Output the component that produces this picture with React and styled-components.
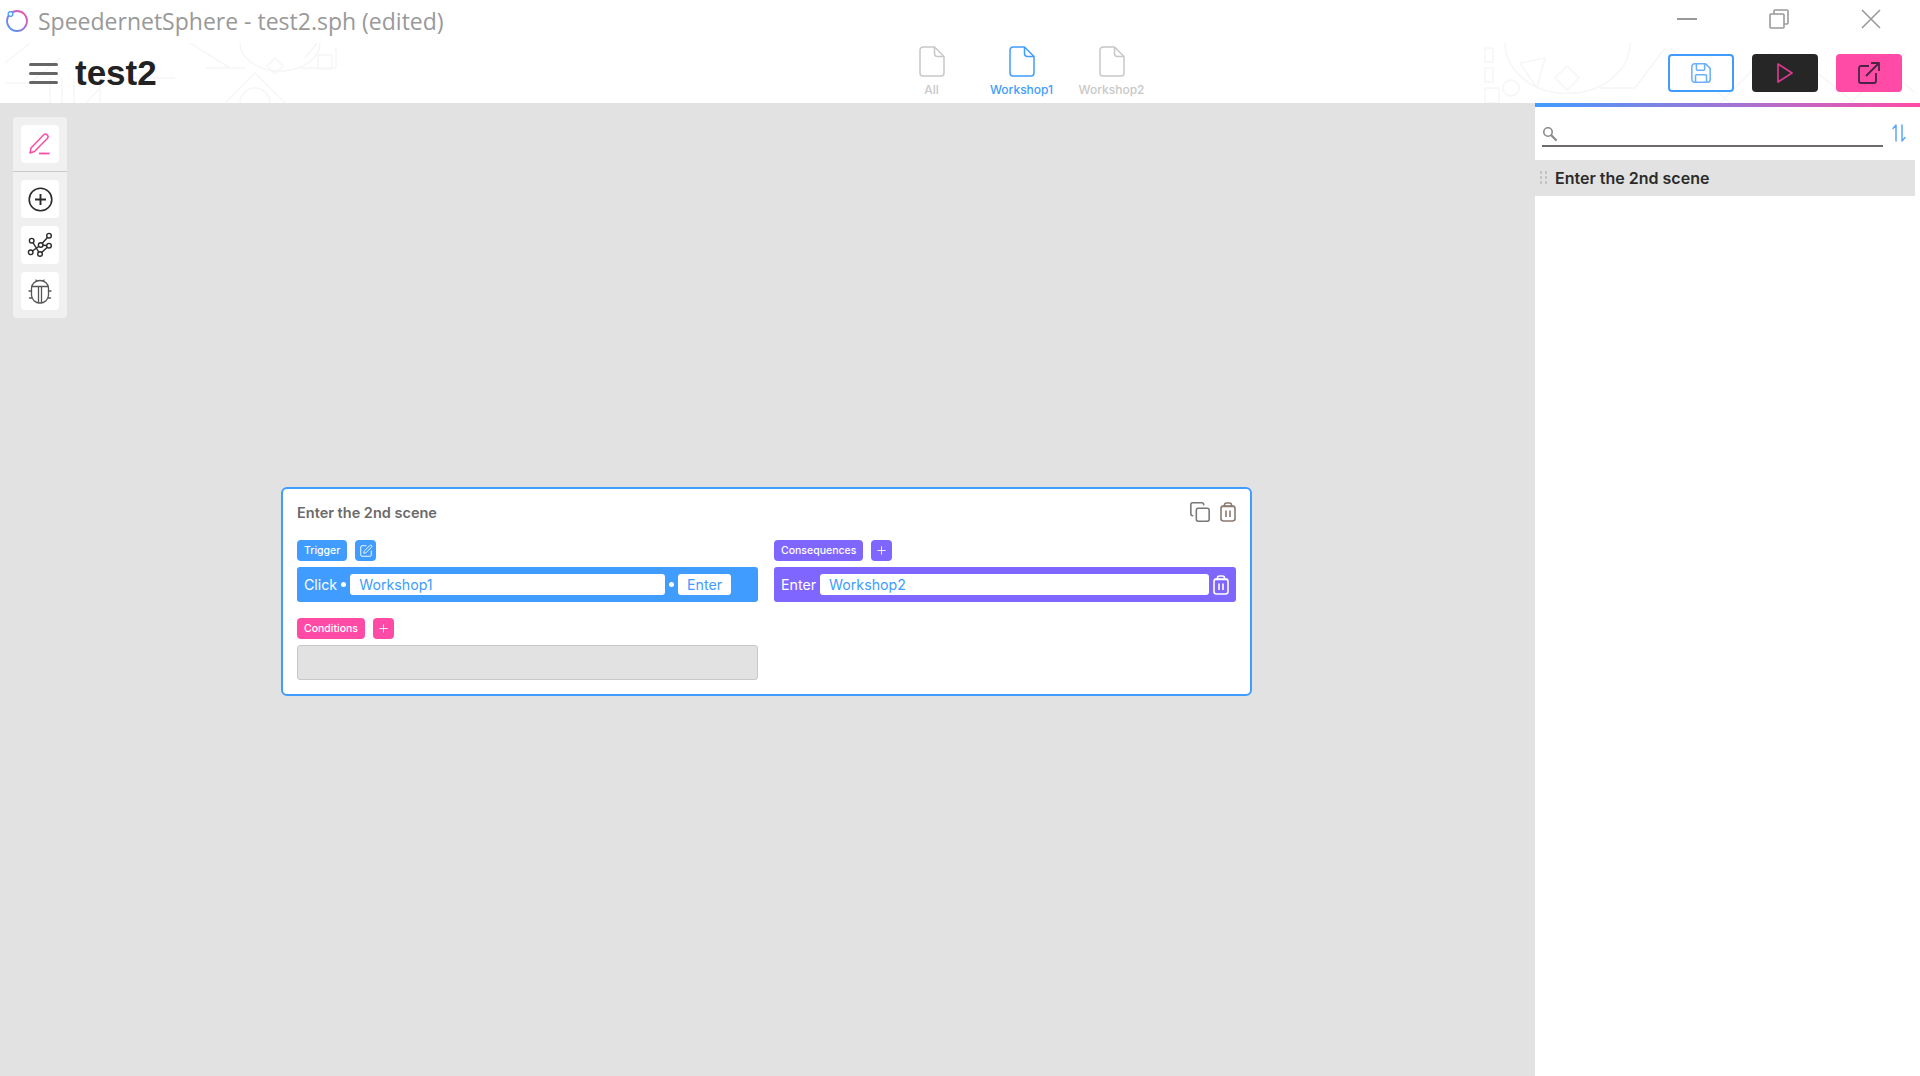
import React from 'react';
import styled, { createGlobalStyle } from 'styled-components';
import { SquarePen, Plus, Copy } from 'lucide-react';

const GlobalStyle = createGlobalStyle`
  html, body {
    margin: 0;
    padding: 0;
    height: 100%;
    overflow: hidden;
    background: #fff;
    font-family: 'Inter', sans-serif;
  }
`;

const blue = '#409cff';
const purple = '#7f66ff';
const pink = '#ff4ba6';

const Page = styled.div`
  width: 1920px;
  height: 1076px;
  display: flex;
  flex-direction: column;
`;

const TitleBar = styled.div`
  height: 43px;
  flex: none;
  display: flex;
  align-items: center;
  padding-left: 5px;
  gap: 10px;
  padding-bottom: 2px;
  box-sizing: border-box;
`;

const AppTitle = styled.span`
  font-family: 'Open Sans', sans-serif;
  font-size: 23px;
  color: #999;
  flex: 1;
`;

const WinControls = styled.div`
  display: flex;
  width: 276px;
  margin-right: 3px;
  height: 100%;
  align-items: center;
  padding-bottom: 3px;
  box-sizing: border-box;
`;

const WinButton = styled.div`
  width: 92px;
  display: flex;
  justify-content: center;
`;

const Header = styled.header`
  height: 60px;
  flex: none;
  position: relative;
  display: grid;
  grid-template-columns: 1fr auto 1fr;
  align-items: center;
  padding: 0 18px 0 29px;
`;

const Watermark = styled.svg`
  position: absolute;
  top: 0;
  ${({ $side }) => ($side === 'left' ? 'left: 0;' : 'right: 0;')}
  width: ${({ $w }) => $w}px;
  height: 60px;
  fill: none;
  stroke: #f6f6f6;
  stroke-width: 1.5;
`;

const HeaderLeft = styled.div`
  display: flex;
  align-items: center;
  gap: 17px;
  position: relative;
`;

const Burger = styled.div`
  width: 29px;
  display: flex;
  flex-direction: column;
  gap: 6px;

  i {
    display: block;
    height: 3px;
    border-radius: 2px;
    background: #666;
  }
`;

const DocName = styled.h1`
  margin: 0;
  font-family: 'Liberation Sans', sans-serif;
  font-size: 35px;
  font-weight: 700;
  color: #222;
`;

const Tabs = styled.div`
  display: flex;
  position: relative;
  padding: 0 0 4px 112px;
`;

const Tab = styled.div`
  width: 90px;
  display: flex;
  flex-direction: column;
  align-items: center;
  color: ${({ $active }) => ($active ? blue : '#c8c8c8')};
  font-size: 12px;
  font-weight: 500;
  gap: 5px;
`;

const HeaderActions = styled.div`
  display: flex;
  justify-content: flex-end;
  gap: 18px;
  position: relative;
`;

const ActionButton = styled.button`
  width: 66px;
  height: 38px;
  padding: 0;
  border-radius: 4px;
  display: flex;
  align-items: center;
  justify-content: center;
  box-sizing: border-box;
  border: ${({ $outline }) => ($outline ? `2px solid ${blue}` : 'none')};
  background: ${({ $bg }) => $bg};
`;

const Body = styled.div`
  flex: 1;
  display: flex;
  min-height: 0;
`;

const Canvas = styled.main`
  width: 1535px;
  flex: none;
  background: #e2e2e2;
  position: relative;
  padding: 14px 0 0 13px;
  box-sizing: border-box;
`;

const ToolPanel = styled.div`
  width: 54px;
  background: #f0f0f0;
  border-radius: 4px;
  padding: 8px;
  box-sizing: border-box;
  display: flex;
  flex-direction: column;
  gap: 8px;
`;

const ToolButton = styled.div`
  height: 38px;
  background: #fff;
  border-radius: 4px;
  display: flex;
  align-items: center;
  justify-content: center;
`;

const ToolDivider = styled.div`
  height: 1px;
  background: #c9c9c9;
  margin: 0 -8px;
`;

const Card = styled.section`
  position: absolute;
  left: 281px;
  top: 384px;
  width: 971px;
  height: 209px;
  box-sizing: border-box;
  background: #fff;
  border: 2px solid ${blue};
  border-radius: 6px;
  padding: 14px 14px 0;
`;

const CardHead = styled.div`
  height: 24px;
  box-sizing: border-box;
  padding-bottom: 6px;
  display: flex;
  align-items: center;
  justify-content: space-between;
  margin-bottom: 13px;
`;

const CardTitle = styled.div`
  font-size: 14.5px;
  font-weight: 600;
  color: #6a6a6a;
`;

const CardIcons = styled.div`
  display: flex;
  align-items: center;
  gap: 9px;
`;

const Columns = styled.div`
  display: grid;
  grid-template-columns: 461px 462px;
  gap: 16px;
`;

const Column = styled.div`
  display: flex;
  flex-direction: column;
`;

const LabelRow = styled.div`
  display: flex;
  gap: 8px;
  margin-bottom: 6px;
  height: 21px;
`;

const Tag = styled.div`
  height: 21px;
  padding: 0 7px;
  border-radius: 4px;
  display: flex;
  align-items: center;
  background: ${({ $c }) => $c};
  color: #fff;
  font-size: 10.5px;
  font-weight: 500;
`;

const TagButton = styled.div`
  width: 21px;
  height: 21px;
  border-radius: 4px;
  display: flex;
  align-items: center;
  justify-content: center;
  background: ${({ $c }) => $c};
`;

const RuleBar = styled.div`
  height: 35px;
  border-radius: 3px;
  background: ${({ $c }) => $c};
  display: flex;
  align-items: center;
  padding: 0 7px;
  color: #fff;
  font-size: 14.2px;
  margin-bottom: 16px;
`;

const Dot = styled.span`
  width: 5px;
  height: 5px;
  border-radius: 50%;
  background: #fff;
  flex: none;
  margin: 0 4px;
`;

const Gap = styled.span`
  width: ${({ $w }) => $w}px;
  flex: none;
`;

const Field = styled.div`
  height: 21px;
  background: #fff;
  border-radius: 3px;
  color: ${blue};
  font-size: 14.2px;
  display: flex;
  align-items: center;
  box-sizing: border-box;
  padding: 0 9px;
  flex: ${({ $grow }) => ($grow ? 1 : 'none')};
`;

const EmptyBox = styled.div`
  height: 35px;
  box-sizing: border-box;
  background: #e2e2e2;
  border: 1px solid #c8c8c8;
  border-radius: 3px;
`;

const SidePanel = styled.aside`
  flex: 1;
  background: #fff;
  position: relative;
  padding: 4px 5px 0 0;
  display: flex;
  flex-direction: column;
`;

const GradientLine = styled.div`
  position: absolute;
  top: 0;
  left: 0;
  right: 0;
  height: 4px;
  background: linear-gradient(90deg, ${blue}, ${pink});
`;

const SearchRow = styled.div`
  height: 53px;
  flex: none;
  display: flex;
  align-items: flex-start;
  padding: 16px 0 0 7px;
  box-sizing: border-box;
`;

const SearchBox = styled.div`
  width: 341px;
  height: 22px;
  border-bottom: 2px solid #6e6a6a;
  display: flex;
  align-items: center;
`;

const SortIcon = styled.div`
  margin-left: 9px;
  margin-top: 1px;
`;

const SceneItem = styled.div`
  height: 36px;
  background: #e2e2e2;
  display: flex;
  align-items: center;
  padding-left: 5px;
  padding-bottom: 1px;
  box-sizing: border-box;
  gap: 7px;
  font-size: 16px;
  font-weight: 600;
  color: #2b2b2b;
`;

const Handle = styled.div`
  display: grid;
  grid-template-columns: 2px 2px;
  gap: 2px 3px;
  margin-right: 1px;

  i {
    display: block;
    width: 2px;
    height: 3px;
    background: #c4c4c4;
  }
`;

const FileIcon = () => (
  <svg width="26" height="31" viewBox="0 0 26 31" fill="none" stroke="currentColor" strokeWidth="1.5" strokeLinejoin="round">
    <path d="M15.5 1H4a3 3 0 0 0-3 3v23a3 3 0 0 0 3 3h18a3 3 0 0 0 3-3V10.5z" />
    <path d="M15.5 1v6.5a3 3 0 0 0 3 3H25" />
  </svg>
);

const BugIcon = () => (
  <svg width="24" height="26" viewBox="0 0 24 26" fill="none" stroke="#555" strokeWidth="1.3" strokeLinecap="round">
    <path d="M3.5 10a8.5 7.5 0 0 1 17 0v7a8.5 8 0 0 1-17 0z" />
    <path d="M4 8.5h16M10.5 8.5V24.8M13.5 8.5V24.8M8 2 8.5 3M16 2 15.5 3M3.5 13H1M20.5 13H23M4 20H1.5M20 20H22.5" />
  </svg>
);

const GraphIcon = () => (
  <svg width="26" height="26" viewBox="0 0 26 26" fill="none" stroke="#2a2a2a" strokeWidth="1.4">
    <path d="M4.7 8.7 13 22M3.7 20.3 13.7 13 22 3.7M13.7 13 22 13.7M13 22 22 13.7" />
    <circle cx="22" cy="3.7" r="2.3" fill="#fff" />
    <circle cx="13.7" cy="13" r="2.3" fill="#fff" />
    <circle cx="22" cy="13.7" r="2.3" fill="#fff" />
    <circle cx="4.7" cy="8.7" r="2.3" fill="#fff" />
    <circle cx="3.7" cy="20.3" r="2.3" fill="#fff" />
    <circle cx="13" cy="22" r="2.3" fill="#fff" />
  </svg>
);

const BinIcon = ({ color }) => (
  <svg width="16" height="20" viewBox="0 0 16 20" fill="none" stroke={color} strokeWidth="1.6" strokeLinejoin="round">
    <rect x="1" y="4" width="14" height="15" rx="2.5" />
    <path d="M4.5 4V3a2 2 0 0 1 2-2h3a2 2 0 0 1 2 2v1M1 4.5h14M6 8.5v6.5M10 8.5v6.5" />
  </svg>
);

const App = () => (
  <Page>
    <GlobalStyle />
    <TitleBar>
      <svg width="23" height="23" viewBox="0 0 23 23" fill="none">
        <defs>
          <linearGradient id="logo" x1="0" y1="1" x2="1" y2="0">
            <stop offset="0" stopColor={blue} />
            <stop offset="1" stopColor={pink} />
          </linearGradient>
        </defs>
        <circle cx="12" cy="12" r="10" stroke="url(#logo)" strokeWidth="1.8" />
        <circle cx="5.5" cy="5" r="2.4" fill="#fff" stroke={blue} strokeWidth="1.2" />
      </svg>
      <AppTitle>SpeedernetSphere - test2.sph (edited)</AppTitle>
      <WinControls>
        <WinButton>
          <svg width="20" height="2"><rect width="20" height="2" fill="#999" /></svg>
        </WinButton>
        <WinButton>
          <svg width="20" height="20" viewBox="0 0 20 20" fill="none" stroke="#999" strokeWidth="1.6">
            <rect x="1" y="5" width="14" height="14" rx="1" />
            <path d="M5 5V2a1 1 0 0 1 1-1h12a1 1 0 0 1 1 1v12a1 1 0 0 1-1 1h-3" />
          </svg>
        </WinButton>
        <WinButton>
          <svg width="20" height="20" viewBox="0 0 20 20" stroke="#999" strokeWidth="1.6">
            <path d="M1 1 19 19M19 1 1 19" />
          </svg>
        </WinButton>
      </WinControls>
    </TitleBar>

    <Header>
      <Watermark $side="left" $w={340} viewBox="0 0 340 60">
        <path d="M5 20 30 0M5 40H30L60 15M50 60V35M62 60V35M74 60V35M86 60 100 45M100 60V35H175M190 0 230 25M205 25H245M225 60l30-30 30 30M240 60a15 15 0 0 1 30 0" />
        <path d="M240 0a40 28 0 0 0 80 0M275 15l8 8-8 8-8-8z" />
        <path d="M300 25h36V5M318 12h14v14h-14zM305 15l12-15" />
      </Watermark>
      <Watermark $side="right" $w={450} viewBox="0 0 450 60">
        <path d="M15 5h8v14h-8zM15 25h8v14h-8zM15 45h14v15H15zM33 45a8 8 0 1 0 16 0 8 8 0 0 0-16 0z" />
        <path d="M35 0a62 50 0 0 0 125 0M50 20l25 -5-8 30zM85 35l12-12 12 12-12 12z" />
        <path d="M130 45h35l30-40M200 5l60 55M250 60l50-50M335 20l50 40M380 60l55-50M400 10l45 40" />
      </Watermark>
      <HeaderLeft>
        <Burger><i /><i /><i /></Burger>
        <DocName>test2</DocName>
      </HeaderLeft>
      <Tabs>
        <Tab><FileIcon />All</Tab>
        <Tab $active><FileIcon />Workshop1</Tab>
        <Tab><FileIcon />Workshop2</Tab>
      </Tabs>
      <HeaderActions>
        <ActionButton $outline $bg="#fff">
          <svg width="22" height="22" viewBox="0 0 24 24" fill="none" stroke="#6bb0ff" strokeWidth="1.7" strokeLinejoin="round">
            <path d="M5 2h12l5 5v12a3 3 0 0 1-3 3H5a3 3 0 0 1-3-3V5a3 3 0 0 1 3-3z" />
            <path d="M7 2v6a1 1 0 0 0 1 1h7a1 1 0 0 0 1-1V2M6 22v-7a1 1 0 0 1 1-1h10a1 1 0 0 1 1 1v7" />
          </svg>
        </ActionButton>
        <ActionButton $bg="#262626">
          <svg width="18" height="22" viewBox="0 0 18 22" fill="none" stroke="#d9398f" strokeWidth="1.7" strokeLinejoin="round">
            <path d="M2 2 16 11 2 20z" />
          </svg>
        </ActionButton>
        <ActionButton $bg={pink}>
          <svg width="22" height="22" viewBox="0 0 22 22" fill="none" stroke="#4a2445" strokeWidth="1.8" strokeLinejoin="round">
            <path d="M11 4H3a2 2 0 0 0-2 2v13a2 2 0 0 0 2 2h13a2 2 0 0 0 2-2v-8" />
            <path d="M8 14 20 2M13 1h8v8" />
          </svg>
        </ActionButton>
      </HeaderActions>
    </Header>

    <Body>
      <Canvas>
        <ToolPanel>
          <ToolButton>
            <svg width="24" height="24" viewBox="0 0 24 24" fill="none" stroke={pink} strokeWidth="1.5" strokeLinejoin="round">
              <path d="M2 21 3 16 15.5 3a2.4 2.4 0 0 1 3.8 3.5L6.5 19.5z" />
              <path d="M11 21.5h10.5" strokeWidth="1.8" />
            </svg>
          </ToolButton>
          <ToolDivider />
          <ToolButton>
            <svg width="25" height="25" viewBox="0 0 25 25" fill="none" stroke="#2a2a2a" strokeWidth="1.6">
              <circle cx="12.5" cy="12.5" r="11.3" />
              <path d="M12.5 7v11M7 12.5h11" strokeWidth="1.9" />
            </svg>
          </ToolButton>
          <ToolButton><GraphIcon /></ToolButton>
          <ToolButton><BugIcon /></ToolButton>
        </ToolPanel>

        <Card>
          <CardHead>
            <CardTitle>Enter the 2nd scene</CardTitle>
            <CardIcons>
              <Copy size={22} color="#777" strokeWidth={1.7} />
              <BinIcon color="#8a7a70" />
            </CardIcons>
          </CardHead>
          <Columns>
            <Column>
              <LabelRow>
                <Tag $c={blue}>Trigger</Tag>
                <TagButton $c={blue}><SquarePen size={14} color="#fff" strokeWidth={1.6} /></TagButton>
              </LabelRow>
              <RuleBar $c={blue}>
                Click
                <Dot />
                <Field $grow>Workshop1</Field>
                <Dot />
                <Field>Enter</Field>
                <Gap $w={20} />
              </RuleBar>
              <LabelRow>
                <Tag $c={pink}>Conditions</Tag>
                <TagButton $c={pink}><Plus size={13} color="#fff" strokeWidth={1.6} /></TagButton>
              </LabelRow>
              <EmptyBox />
            </Column>
            <Column>
              <LabelRow>
                <Tag $c={purple}>Consequences</Tag>
                <TagButton $c={purple}><Plus size={13} color="#fff" strokeWidth={1.6} /></TagButton>
              </LabelRow>
              <RuleBar $c={purple}>
                Enter
                <Gap $w={4} />
                <Field $grow>Workshop2</Field>
                <Gap $w={4} />
                <BinIcon color="#fff" />
              </RuleBar>
            </Column>
          </Columns>
        </Card>
      </Canvas>

      <SidePanel>
        <GradientLine />
        <SearchRow>
          <SearchBox>
            <svg width="16" height="16" viewBox="0 0 16 16" fill="none" stroke="#8a8a8a" strokeWidth="1.6" strokeLinecap="round">
              <circle cx="6" cy="6" r="4.2" />
              <path d="M9.5 9.5 14 14" strokeWidth="2.2" />
            </svg>
          </SearchBox>
          <SortIcon>
            <svg width="14" height="18" viewBox="0 0 14 18" fill="none" stroke="#5aa7ff" strokeWidth="1.5" strokeLinecap="round" strokeLinejoin="round">
              <path d="M4 17V1L1 4.5M10 1v16l3-3.5" />
            </svg>
          </SortIcon>
        </SearchRow>
        <SceneItem>
          <Handle><i /><i /><i /><i /><i /><i /></Handle>
          Enter the 2nd scene
        </SceneItem>
      </SidePanel>
    </Body>
  </Page>
);

export default App;
